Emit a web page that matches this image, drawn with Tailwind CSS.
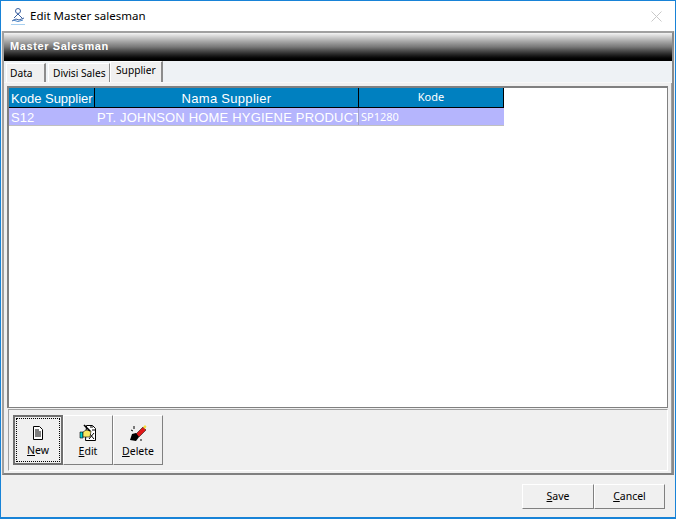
<!DOCTYPE html>
<html><head><meta charset="utf-8">
<script src="https://cdn.jsdelivr.net/npm/@tailwindcss/browser@4"></script>
</head>
<body class="m-0 overflow-hidden bg-white">
<div class="w-[676px] h-[519px] flex flex-col border border-[#1883d7] border-b-2 font-['Noto_Sans',sans-serif] text-[11px] text-black bg-[#f0f0f0]">
  <!-- title -->
  <div class="h-[30px] shrink-0 bg-white flex items-center pl-[9px] pr-[9px]">
    <svg width="16" height="18" viewBox="0 0 16 18" class="shrink-0"><g fill="none" stroke="#3a5f9f" stroke-width="1"><circle cx="8" cy="4" r="2.5"/><path d="M4 11l4-4 4 4M2 14l4-2 3 1 5-2"/><path d="M3 13q5 3 10 0" stroke="#4a86c8"/></g><path d="M1 17.5h14" stroke="#a8d0f0"/></svg>
    <span class="ml-[4px] text-[11.5px] leading-none text-black">Edit Master salesman</span>
    <svg width="11" height="11" viewBox="0 0 11 11" class="ml-auto mr-[4px]"><path d="M0.5 0.5l10 10M10.5 0.5l-10 10" stroke="#c9c9c9" stroke-width="1"/></svg>
  </div>
  <!-- main panel -->
  <div class="h-[444px] shrink-0 mx-px border-2 border-[#a0a0a0] border-r-[#8a8a8a] border-b-[#808080] bg-[#f0f0f0] flex flex-col">
    <div class="h-[28px] shrink-0 bg-gradient-to-b from-[#f4f4f4] via-[#777777] to-black flex items-center pl-[6px] pb-[2px] text-[11px] font-bold tracking-[0.6px] text-white font-['Liberation_Sans',sans-serif]">Master Salesman</div>
    <!-- tabs -->
    <div class="h-[22px] shrink-0 bg-[#eef2f5] flex items-end pl-[2px] border-b border-[#f8f8f8] text-[10.2px]">
      <div class="h-[19px] w-[40px] pl-[3px] pt-[2px] flex items-center bg-[#f0f0f0] border-r-2 border-[#8c8c8c] border-l border-l-white border-t border-t-white">Data</div>
      <div class="h-[19px] w-[62px] ml-[2px] pl-[4px] pt-[2px] flex items-center bg-[#f0f0f0] border-r border-[#8c8c8c] border-l border-l-white border-t border-t-white whitespace-nowrap">Divisi Sales</div>
      <div class="h-[21px] w-[53px] pl-[5px] pb-[3px] flex items-center bg-[#f0f0f0] border-r-2 border-[#8c8c8c] border-l border-l-white border-t border-t-white">Supplier</div>
    </div>
    <!-- content -->
    <div class="flex-1 min-h-0 flex flex-col px-[3px] pt-[3px] pb-[2px] border-r border-[#a0a0a0]">
      <div class="h-[322px] shrink-0 bg-white border border-[#808080] border-t-2 border-l-2">
        <div class="flex h-[20px] w-[495px] text-white bg-black gap-px pb-px font-['Liberation_Sans',sans-serif]">
          <div class="w-[85px] bg-[#0080c0] text-[13px] leading-[21px] pl-[2px] whitespace-nowrap overflow-hidden">Kode Supplier</div>
          <div class="w-[263px] bg-[#0080c0] text-[13px] tracking-[0.3px] leading-[21px] text-center">Nama Supplier</div>
          <div class="w-[144px] bg-[#0080c0] text-[11px] leading-[17px] text-center font-['Noto_Sans',sans-serif]">Kode</div>
        </div>
        <div class="flex h-[18px] w-[495px] bg-[#b5b5fd] border-b border-[#c0c0c0] text-white">
          <div class="w-[86px] text-[13px] leading-[20px] pl-[2px] font-['Liberation_Sans',sans-serif]">S12</div>
          <div class="w-[264px] text-[13px] tracking-[0.18px] leading-[20px] pl-[2px] whitespace-nowrap overflow-hidden border-r border-[#a0a0c8] font-['Liberation_Sans',sans-serif]">PT. JOHNSON HOME HYGIENE PRODUCT</div>
          <div class="flex-1 text-[11px] leading-[18px] pl-[2px]">SP1280</div>
        </div>
      </div>
      <!-- toolbar -->
      <div class="flex-1 mt-px ml-px border border-[#a0a0a0] border-b-white border-r-white bg-[#f0f0f0] pl-[4px] pt-[5px] flex items-start text-[10.5px]">
        <button class="w-[50px] h-[50px] flex flex-col items-center justify-center border-2 border-[#707070] relative">
          <span class="absolute inset-px border border-dotted border-black"></span>
          <svg width="16" height="16" viewBox="0 0 16 16"><path d="M3.5 1.5h6l3 3v10h-9z" fill="#fff" stroke="#000"/><path d="M5 5h4M5 7h6M5 9h6M5 11h6" stroke="#000"/></svg>
          <span class="mt-[4px] leading-none"><u>N</u>ew</span>
        </button>
        <button class="w-[50px] h-[50px] flex flex-col items-center justify-center border border-white border-r-[#808080] border-b-[#808080]">
          <svg width="18" height="18" viewBox="0 0 18 18"><path d="M7.5 1.5h6l3 3v12h-10z" fill="#fff" stroke="#000"/><path d="M10 9l5 6M15 9l-5 6M11 3h3M13 6h3" stroke="#000"/><path d="M1 8h3v6H1z" fill="#00d0d0" stroke="#000" stroke-width=".6"/><path d="M4 8l3-2 5 1-1 6H4z" fill="#f8e860" stroke="#000" stroke-width=".6"/><path d="M5 1l6 6" stroke="#000" stroke-width="1.6"/></svg>
          <span class="mt-[4px] leading-none"><u>E</u>dit</span>
        </button>
        <button class="w-[50px] h-[50px] flex flex-col items-center justify-center border border-white border-r-[#808080] border-b-[#808080]">
          <svg width="18" height="18" viewBox="0 0 18 18"><path d="M7 10l7-7 3 3-7 7z" fill="#e01818" stroke="#000" stroke-width=".5"/><path d="M14 3l2-2 1.5 1.5L16 5z" fill="#f8e040"/><path d="M1 16l2-6 4-1 3 4-3 4z" fill="#000"/><path d="M5 2v3M2 6l2 1M11 16h2" stroke="#000"/></svg>
          <span class="mt-[4px] leading-none"><u>D</u>elete</span>
        </button>
      </div>
    </div>
  </div>
  <!-- footer -->
  <div class="flex-1 flex justify-end items-start pt-[9px] pr-[10px] bg-[#f0f0f0]">
    <button class="w-[72px] h-[25px] border border-white border-r-[#808080] border-b-[#808080] text-[10.5px] leading-none"><u>S</u>ave</button>
    <button class="w-[71px] h-[25px] border border-white border-r-[#808080] border-b-[#808080] text-[10.5px] leading-none"><u>C</u>ancel</button>
  </div>
</div>
</body></html>
